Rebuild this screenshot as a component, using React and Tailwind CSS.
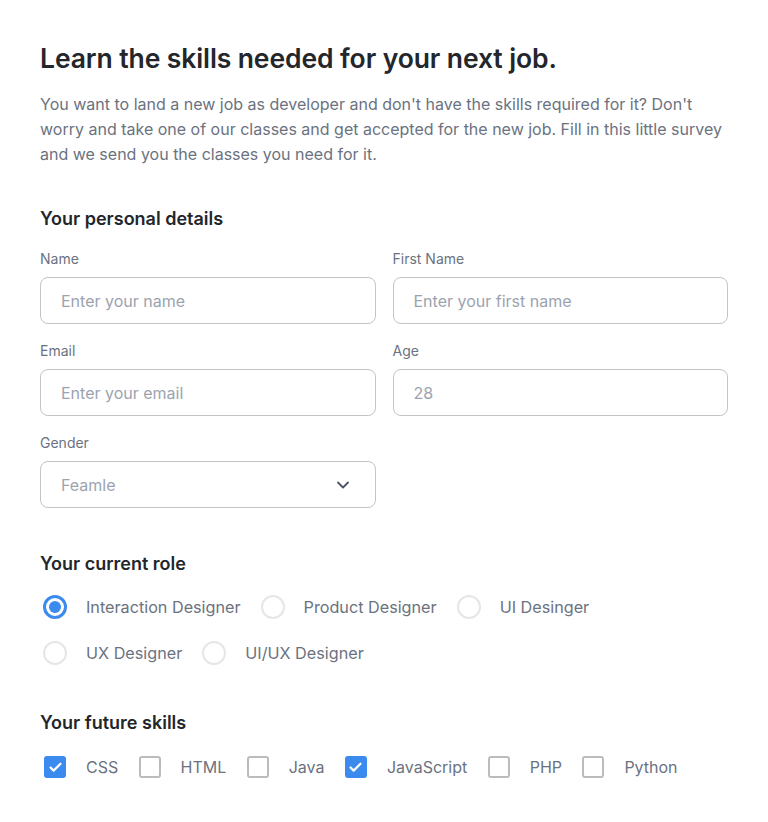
import { ChevronDown, Check } from 'lucide-react'

const roles = ['Interaction Designer', 'Product Designer', 'UI Desinger', 'UX Designer', 'UI/UX Designer']
const skills = [
  { name: 'CSS', on: true },
  { name: 'HTML', on: false },
  { name: 'Java', on: false },
  { name: 'JavaScript', on: true },
  { name: 'PHP', on: false },
  { name: 'Python', on: false },
]

function Field({ label, placeholder }) {
  return (
    <div>
      <label className="block text-[14px] leading-5 text-[#6b7280] mb-2">{label}</label>
      <div className="h-[47px] rounded-lg border border-[#c4c4c7] px-5 flex items-center text-[16px] text-[#9ca3af]">
        {placeholder}
      </div>
    </div>
  )
}

export default function App() {
  return (
    <div className="bg-white min-h-[822px] px-10 pt-[42px] font-['Inter',sans-serif]">
      <h1 className="text-[26.5px] leading-8 font-semibold text-[#23262b] tracking-[-0.1px]">
        Learn the skills needed for your next job.
      </h1>
      <p className="mt-[18px] text-[16px] leading-[25px] text-[#6b7280]">
        You want to land a new job as developer and don't have the skills required for it? Don't worry and take one of our classes and get accepted for the new job. Fill in this little survey and we send you the classes you need for it.
      </p>

      {/* Personal details */}
      <h2 className="mt-[40px] text-[18px] leading-6 font-semibold text-[#23262b]">Your personal details</h2>
      <div className="mt-[18px] grid grid-cols-2 gap-x-[17px] gap-y-[17px]">
        <Field label="Name" placeholder="Enter your name" />
        <Field label="First Name" placeholder="Enter your first name" />
        <Field label="Email" placeholder="Enter your email" />
        <Field label="Age" placeholder="28" />
        <div>
          <label className="block text-[14px] leading-5 text-[#6b7280] mb-2">Gender</label>
          <div className="h-[47px] rounded-lg border border-[#c4c4c7] pl-5 pr-[22px] flex items-center justify-between text-[16px] text-[#9ca3af]">
            <span>Feamle</span>
            <ChevronDown size={20} strokeWidth={2.2} className="text-[#4b5563]" />
          </div>
        </div>
      </div>

      {/* Current role */}
      <h2 className="mt-[44px] text-[18px] leading-6 font-semibold text-[#23262b]">Your current role</h2>
      <div className="mt-[19px] ml-[3px] flex flex-wrap w-[560px] gap-x-5 gap-y-[22px]">
        {roles.map((r, i) => (
          <div key={r} className="flex items-center gap-[19px] h-6">
            {i === 0 ? (
              <span className="w-6 h-6 rounded-full border-[3px] border-[#3b8bef] flex items-center justify-center">
                <span className="w-3 h-3 rounded-full bg-[#3b8bef]" />
              </span>
            ) : (
              <span className="w-6 h-6 rounded-full border-2 border-[#e6e6e8]" />
            )}
            <span className="text-[16.2px] text-[#6b7280]">{r}</span>
          </div>
        ))}
      </div>

      {/* Future skills */}
      <h2 className="mt-[46px] text-[18px] leading-6 font-semibold text-[#23262b]">Your future skills</h2>
      <div className="mt-[20px] flex items-center gap-x-[20.4px] pl-1">
        {skills.map(s => (
          <div key={s.name} className="flex items-center gap-5 h-6">
            {s.on ? (
              <span className="w-[22px] h-[22px] rounded-[3px] bg-[#3b8bef] flex items-center justify-center">
                <Check size={15} strokeWidth={3.5} className="text-white" />
              </span>
            ) : (
              <span className="w-[22px] h-[22px] rounded-[3px] border-2 border-[#bcbcbf]" />
            )}
            <span className="text-[16px] text-[#6b7280]">{s.name}</span>
          </div>
        ))}
      </div>
    </div>
  )
}
